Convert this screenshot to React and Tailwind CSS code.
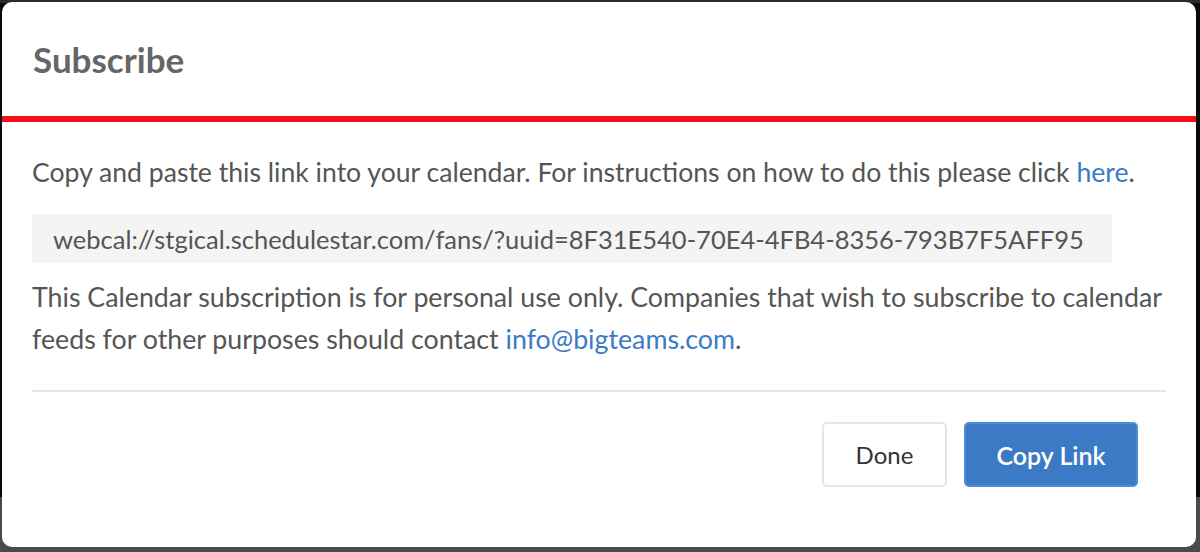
export default function App() {
  return (
    <div className="h-[552px] w-[1200px] overflow-hidden bg-[linear-gradient(to_bottom,#2b2b2b_0px,#2b2b2b_3px,#0a0a0a_3px,#0a0a0a_497px,#4a4a4a_497px)] pt-[2px] pl-[2px]" style={{ fontFamily: "Lato, 'Noto Sans', sans-serif" }}>
      <div className="flex h-[545px] w-[1194px] flex-col overflow-hidden rounded-[10px] bg-white">
        <div className="flex h-[114px] items-center px-[31px]">
          <h1 className="text-[35px] font-bold text-[#666666]">Subscribe</h1>
        </div>
        <div className="h-[6px] bg-[#f50d1a]" />
        <div className="px-[30px] pt-[29px] text-[26.6px] leading-[42px] text-[#555555]">
          <p className="whitespace-nowrap">
            Copy and paste this link into your calendar. For instructions on how to do this please click{" "}
            <a className="text-[#3a7bc8]">here</a>.
          </p>
          <div className="mt-[21px] flex h-[49px] w-[1080px] items-center whitespace-nowrap bg-[#f4f4f4] pl-[21px] text-[25.5px] text-[#555555]">
            webcal://stgical.schedulestar.com/fans/?uuid=8F31E540-70E4-4FB4-8356-793B7F5AFF95
          </div>
          <p className="mt-[13px] text-[26.75px]">
            <span className="whitespace-nowrap">This Calendar subscription is for personal use only. Companies that wish to subscribe to calendar</span>{" "}
            feeds for other purposes should contact{" "}
            <a className="text-[#3a7bc8]">info@bigteams.com</a>.
          </p>
          <div className="mt-[30px] h-[2px] bg-[#e5e5e5]" />
          <div className="mt-[30px] flex justify-end gap-[17px] pr-[28px]">
            <button className="h-[65px] w-[125px] rounded-[5px] border-2 border-[#e6e6e6] bg-white text-[24px] text-[#333333]">
              Done
            </button>
            <button className="h-[65px] w-[174px] rounded-[5px] border-2 border-[#4a8ddb] bg-[#3d7ac6] text-[25px] font-semibold text-white">
              Copy Link
            </button>
          </div>
        </div>
      </div>
    </div>
  );
}
